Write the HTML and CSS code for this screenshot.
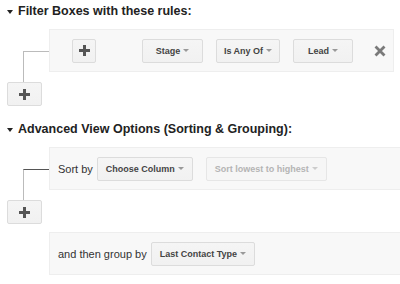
FILE: index.html
```html
<!DOCTYPE html>
<html>
<head>
<meta charset="utf-8">
<link rel="stylesheet" href="styles.css">
</head>
<body>
<div class="page">
  <div class="heading heading-first"><span class="tri"></span>Filter Boxes with these rules:</div>
  <div class="tree">
    <div class="elbow"></div>
    <div class="panel panel-filter">
      <button class="btn btn-plus-inner" type="button">
        <svg width="11" height="11" viewBox="0 0 11 11"><rect x="4" y="0" width="3" height="11" fill="#555"/><rect x="0" y="4" width="11" height="3" fill="#555"/></svg>
      </button>
      <button class="btn dd dd-stage" type="button">Stage<span class="caret"></span></button>
      <button class="btn dd dd-op" type="button">Is Any Of<span class="caret"></span></button>
      <button class="btn dd dd-val" type="button">Lead<span class="caret"></span></button>
      <span class="remove">
        <svg width="12" height="12" viewBox="0 0 12 12"><path d="M2.5 2.5 L9.5 9.5 M9.5 2.5 L2.5 9.5" stroke="#7a7a7a" stroke-width="2.8" stroke-linecap="square"/></svg>
      </span>
    </div>
    <button class="btn add-btn" type="button">
      <svg width="11" height="11" viewBox="0 0 11 11"><rect x="4" y="0" width="3" height="11" fill="#555"/><rect x="0" y="4" width="11" height="3" fill="#555"/></svg>
    </button>
  </div>

  <div class="heading heading-second"><span class="tri"></span>Advanced View Options (Sorting &amp; Grouping):</div>
  <div class="tree">
    <div class="elbow elbow-dark"></div>
    <div class="panel panel-wide">
      <span class="label">Sort by</span>
      <button class="btn dd" type="button">Choose Column<span class="caret"></span></button>
      <button class="btn dd dd-disabled" type="button">Sort lowest to highest<span class="caret"></span></button>
    </div>
    <button class="btn add-btn" type="button">
      <svg width="11" height="11" viewBox="0 0 11 11"><rect x="4" y="0" width="3" height="11" fill="#555"/><rect x="0" y="4" width="11" height="3" fill="#555"/></svg>
    </button>
    <div class="panel panel-wide panel-group">
      <span class="label">and then group by</span>
      <button class="btn dd" type="button">Last Contact Type<span class="caret"></span></button>
    </div>
  </div>
</div>
</body>
</html>
```

FILE: styles.css
```css
html, body {
  margin: 0;
  padding: 0;
  background: #fff;
  overflow: hidden;
}

.page {
  font-family: "Liberation Sans", Arial, sans-serif;
  color: #222;
  width: 400px;
}

.heading {
  display: flex;
  align-items: center;
  font-size: 12.5px;
  font-weight: bold;
  line-height: 16px;
  height: 16px;
  color: #222;
}

.heading-first {
  margin-top: 3px;
}

.heading-second {
  margin-top: 15px;
}

.tri {
  width: 0;
  height: 0;
  border-left: 3.5px solid transparent;
  border-right: 3.5px solid transparent;
  border-top: 4px solid #222;
  margin-left: 7px;
  margin-right: 5px;
  margin-top: 2px;
}

.tree {
  display: grid;
  grid-template-columns: 7px 42px auto;
  margin-top: 10px;
}

.elbow {
  grid-column: 1 / 3;
  grid-row: 1;
  margin-left: 23px;
  margin-top: 22px;
  border-left: 1px solid #bbb;
  border-top: 1px solid #bbb;
}

.elbow-dark {
  border-top-color: #555;
}

.panel {
  grid-column: 3;
  grid-row: 1;
  display: flex;
  align-items: center;
  box-sizing: border-box;
  height: 43px;
  background: #f8f8f8;
  border: 1px solid #eeeeee;
  margin-bottom: 10px;
}

.panel-filter {
  width: 345px;
  padding-left: 22px;
  padding-right: 7px;
}

.panel-wide {
  width: 370px;
  padding-left: 8px;
}

.panel-group {
  grid-row: 3;
  margin-top: 8px;
  margin-bottom: 0;
}

.btn {
  box-sizing: border-box;
  height: 24px;
  border: 1px solid #dcdcdc;
  border-radius: 2px;
  background: linear-gradient(#f5f5f5, #f1f1f1);
  font-family: "Liberation Sans", Arial, sans-serif;
  font-size: 9px;
  font-weight: bold;
  color: #444;
  padding: 0 8px;
  margin: 0;
  display: inline-flex;
  align-items: center;
  justify-content: center;
}

.btn-plus-inner {
  width: 24px;
  padding: 0;
  margin-right: 33px;
}

.add-btn {
  grid-column: 2;
  grid-row: 2;
  width: 35px;
  padding: 0;
  justify-self: start;
}

.dd {
  white-space: nowrap;
}

.panel-filter .dd {
  min-width: 60px;
  margin-left: 13px;
}

.dd-op {
  width: 64px;
}

.dd-stage {
  width: 61px;
}

.caret {
  width: 0;
  height: 0;
  border-left: 3px solid transparent;
  border-right: 3px solid transparent;
  border-top: 3px solid #999;
  margin-left: 3px;
}

.dd-disabled {
  color: #b4b4b4;
  background: #f6f6f6;
  border-color: #e6e6e6;
  margin-left: 13px;
}

.dd-disabled .caret {
  border-top-color: #ccc;
}

.remove {
  margin-left: auto;
  display: flex;
  width: 12px;
  height: 12px;
}

.label {
  font-size: 11px;
  color: #333;
  margin-right: 4px;
  white-space: nowrap;
}
```
